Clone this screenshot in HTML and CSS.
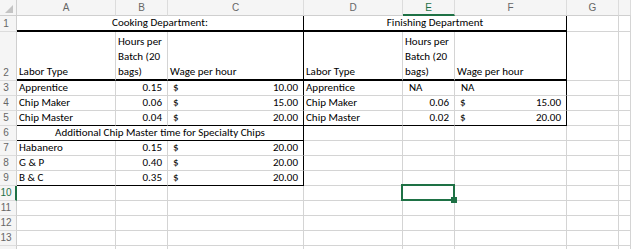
FILE: index.html
```html
<!DOCTYPE html>
<html lang="en">
<head>
    <meta charset="UTF-8">
    <meta name="viewport" content="width=device-width, initial-scale=1.0">
    <title>Labor Costs</title>
    <link rel="stylesheet" href="styles.css">
</head>
<body>
    <div class="sheet">
        <!-- column headers -->
        <div class="corner"><svg width="16" height="15" viewBox="0 0 16 15"><polygon points="5,13 13,13 13,5" fill="#c4c4c4"/></svg></div>
        <div class="colhead">A</div>
        <div class="colhead">B</div>
        <div class="colhead">C</div>
        <div class="colhead">D</div>
        <div class="colhead active">E</div>
        <div class="colhead">F</div>
        <div class="colhead">G</div>
        <div class="colhead"></div>

        <!-- row 1 -->
        <div class="rowhead">1</div>
        <div class="cell span3 center thick-b black-r">Cooking Department:</div>
        <div class="cell span3 center thick-b black-r">Finishing Department</div>
        <div class="cell"></div>
        <div class="cell"></div>

        <!-- row 2 -->
        <div class="rowhead">2</div>
        <div class="cell thick-b">Labor Type</div>
        <div class="cell thick-b">Hours per<br>Batch (20<br>bags)</div>
        <div class="cell thick-b black-r">Wage per hour</div>
        <div class="cell thick-b">Labor Type</div>
        <div class="cell thick-b">Hours per<br>Batch (20<br>bags)</div>
        <div class="cell thick-b black-r">Wage per hour</div>
        <div class="cell"></div>
        <div class="cell"></div>

        <!-- row 3 -->
        <div class="rowhead">3</div>
        <div class="cell">Apprentice</div>
        <div class="cell num">0.15</div>
        <div class="cell acct black-r"><span>$</span><span>10.00</span></div>
        <div class="cell">Apprentice</div>
        <div class="cell pad">NA</div>
        <div class="cell pad black-r">NA</div>
        <div class="cell"></div>
        <div class="cell"></div>

        <!-- row 4 -->
        <div class="rowhead">4</div>
        <div class="cell">Chip Maker</div>
        <div class="cell num">0.06</div>
        <div class="cell acct black-r"><span>$</span><span>15.00</span></div>
        <div class="cell">Chip Maker</div>
        <div class="cell num">0.06</div>
        <div class="cell acct black-r"><span>$</span><span>15.00</span></div>
        <div class="cell"></div>
        <div class="cell"></div>

        <!-- row 5 -->
        <div class="rowhead">5</div>
        <div class="cell black-b">Chip Master</div>
        <div class="cell num black-b">0.04</div>
        <div class="cell acct black-b black-r"><span>$</span><span>20.00</span></div>
        <div class="cell black-b">Chip Master</div>
        <div class="cell num black-b">0.02</div>
        <div class="cell acct black-b black-r"><span>$</span><span>20.00</span></div>
        <div class="cell"></div>
        <div class="cell"></div>

        <!-- row 6 -->
        <div class="rowhead">6</div>
        <div class="cell span3 center black-b black-r">Additional Chip Master time for Specialty Chips</div>
        <div class="cell"></div>
        <div class="cell"></div>
        <div class="cell"></div>
        <div class="cell"></div>
        <div class="cell"></div>

        <!-- row 7 -->
        <div class="rowhead">7</div>
        <div class="cell">Habanero</div>
        <div class="cell num">0.15</div>
        <div class="cell acct black-r"><span>$</span><span>20.00</span></div>
        <div class="cell"></div>
        <div class="cell"></div>
        <div class="cell"></div>
        <div class="cell"></div>
        <div class="cell"></div>

        <!-- row 8 -->
        <div class="rowhead">8</div>
        <div class="cell">G &amp; P</div>
        <div class="cell num">0.40</div>
        <div class="cell acct black-r"><span>$</span><span>20.00</span></div>
        <div class="cell"></div>
        <div class="cell"></div>
        <div class="cell"></div>
        <div class="cell"></div>
        <div class="cell"></div>

        <!-- row 9 -->
        <div class="rowhead">9</div>
        <div class="cell black-b">B &amp; C</div>
        <div class="cell num black-b">0.35</div>
        <div class="cell acct black-b black-r"><span>$</span><span>20.00</span></div>
        <div class="cell"></div>
        <div class="cell"></div>
        <div class="cell"></div>
        <div class="cell"></div>
        <div class="cell"></div>

        <!-- row 10 -->
        <div class="rowhead active">10</div>
        <div class="cell"></div>
        <div class="cell"></div>
        <div class="cell"></div>
        <div class="cell"></div>
        <div class="cell selected"></div>
        <div class="cell"></div>
        <div class="cell"></div>
        <div class="cell"></div>

        <!-- rows 11-13, plus the edge of the next one -->
        <div class="rowhead">11</div>
        <div class="cell"></div><div class="cell"></div><div class="cell"></div><div class="cell"></div>
        <div class="cell"></div><div class="cell"></div><div class="cell"></div><div class="cell"></div>

        <div class="rowhead">12</div>
        <div class="cell"></div><div class="cell"></div><div class="cell"></div><div class="cell"></div>
        <div class="cell"></div><div class="cell"></div><div class="cell"></div><div class="cell"></div>

        <div class="rowhead">13</div>
        <div class="cell"></div><div class="cell"></div><div class="cell"></div><div class="cell"></div>
        <div class="cell"></div><div class="cell"></div><div class="cell"></div><div class="cell"></div>

        <div class="rowhead"></div>
        <div class="cell"></div><div class="cell"></div><div class="cell"></div><div class="cell"></div>
        <div class="cell"></div><div class="cell"></div><div class="cell"></div><div class="cell"></div>
    </div>
</body>
</html>
```

FILE: styles.css
```css
body {
    margin: 0;
    padding: 0;
    background-color: #fff;
    overflow: hidden;
}
.sheet {
    display: grid;
    grid-template-columns: 17px 99px 52px 136px 99px 52px 112px 52px 1fr;
    grid-template-rows: 16px 16px 49px repeat(12, 15px);
    font-family: Carlito, 'Liberation Sans Narrow', 'Liberation Sans', sans-serif;
    font-size: 11px;
    color: #000;
}
.corner,
.colhead,
.rowhead {
    box-sizing: border-box;
    background-color: #f5f5f5;
    font-family: 'Liberation Sans', Arial, sans-serif;
    font-size: 10px;
    color: #666;
}
.corner {
    border-right: 1px solid #cfcfcf;
    border-bottom: 1px solid #cfcfcf;
}
.corner svg {
    display: block;
}
.colhead {
    border-right: 1px solid #dcdcdc;
    border-bottom: 1px solid #cfcfcf;
    text-align: center;
    line-height: 15px;
}
.colhead.active {
    color: #1e7145;
    border-bottom: 2px solid #1e7145;
}
.rowhead {
    border-right: 1px solid #cfcfcf;
    border-bottom: 1px solid #dcdcdc;
    padding-right: 4px;
    display: flex;
    align-items: flex-end;
    justify-content: center;
    line-height: 14px;
}
.rowhead.active {
    color: #1e7145;
    border-right: 2px solid #1e7145;
    padding-right: 3px;
}
.cell {
    box-sizing: border-box;
    border-right: 1px solid #d4d4d4;
    border-bottom: 1px solid #d4d4d4;
    padding: 0 2px 0 2px;
    display: flex;
    align-items: flex-end;
    line-height: 15px;
    white-space: nowrap;
    overflow: hidden;
}
.cell.span3 {
    grid-column: span 3;
}
.cell.center {
    justify-content: center;
}
.cell.num {
    justify-content: flex-end;
    padding-right: 5px;
}
.cell.pad {
    padding-left: 6px;
}
.cell.acct {
    justify-content: space-between;
    padding: 0 5px 0 5px;
}
.cell.thick-b {
    border-bottom: 2px solid #000;
}
.cell.black-b {
    border-bottom-color: #000;
}
.cell.black-r {
    border-right-color: #000;
}
.cell.selected {
    position: relative;
    overflow: visible;
}
.cell.selected::before {
    content: '';
    position: absolute;
    left: -2px;
    right: -1px;
    top: -2px;
    bottom: -1px;
    border: 2px solid #1e7145;
}
.cell.selected::after {
    content: '';
    position: absolute;
    right: -3px;
    bottom: -3px;
    width: 6px;
    height: 6px;
    background-color: #1e7145;
}
```
